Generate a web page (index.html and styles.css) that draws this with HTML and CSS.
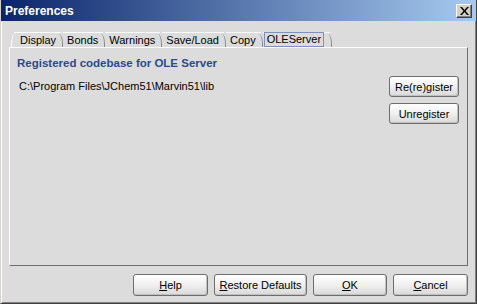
FILE: index.html
```html
<!DOCTYPE html>
<html lang="en">
<head>
    <meta charset="UTF-8" />
    <title>Preferences</title>
    <link rel="stylesheet" href="styles.css">
</head>
<body>

<div class="window">
    <div class="titlebar">
        <span class="title">Preferences</span>
        <button class="close-btn" title="Close">
            <svg width="9" height="8" viewBox="0 0 9 8">
                <path d="M0 0h2l2.5 3 2.5-3h2L5.5 4 9 8H7L4.5 5 2 8H0l3.5-4z" fill="#000"/>
            </svg>
        </button>
    </div>

    <div class="client">
        <div class="tabs">
            <div class="tab first">Display</div>
            <div class="tab">Bonds</div>
            <div class="tab">Warnings</div>
            <div class="tab">Save/Load</div>
            <div class="tab">Copy</div>
            <div class="tab active"><span class="focus">OLEServer</span></div>
        </div>

        <div class="panel">
            <div class="panel-main">
                <h2 class="heading">Registered codebase for OLE Server</h2>
                <p class="path">C:\Program Files\JChem51\Marvin51\lib</p>
            </div>
            <div class="panel-side">
                <button class="btn">Re(re)gister</button>
                <button class="btn">Unregister</button>
            </div>
        </div>

        <div class="footer">
            <button class="btn wide"><u>H</u>elp</button>
            <button class="btn restore"><u>R</u>estore Defaults</button>
            <button class="btn ok"><u>O</u>K</button>
            <button class="btn wide"><u>C</u>ancel</button>
        </div>
    </div>
</div>

</body>
</html>
```

FILE: styles.css
```css
/* WINDOW FRAME */
html, body {
    margin: 0;
    padding: 0;
    width: 477px;
    height: 304px;
    overflow: hidden;
    font-family: 'Liberation Sans', Arial, sans-serif;
    font-size: 11px;
    color: #000;
}

.window {
    box-sizing: border-box;
    width: 477px;
    height: 304px;
    display: flex;
    flex-direction: column;
    background: #dcdcdc;
    border-left: 1px solid #d4d0c8;
    border-right: 1px solid #404040;
    border-bottom: 1px solid #404040;
    box-shadow: inset 1px 0 0 #fff, inset -1px -1px 0 #808080;
}

.titlebar {
    height: 21px;
    flex-shrink: 0;
    display: flex;
    align-items: center;
    justify-content: space-between;
    padding: 0 4px 0 4px;
    background: linear-gradient(to right, #0a246a, #a6caf0);
}

.title {
    color: #fff;
    font-weight: bold;
    font-size: 12px;
    font-family: 'Liberation Sans', Arial, sans-serif;
}

.close-btn {
    width: 16px;
    height: 14px;
    padding: 0;
    margin-top: 1px;
    display: flex;
    align-items: center;
    justify-content: center;
    background: #d4d0c8;
    border: 1px solid;
    border-color: #fff #404040 #404040 #fff;
    box-shadow: inset -1px -1px 0 #808080;
}

.client {
    flex: 1;
    display: flex;
    flex-direction: column;
    padding: 11px 8px 0 8px;
}

/* TABS */
.tabs {
    display: flex;
    height: 15px;
    padding-left: 5px;
}

.tab {
    position: relative;
    height: 14px;
    line-height: 14px;
    padding: 0 5px 0 4px;
    margin-right: 2px;
    border-top: 1px solid #fff;
}
.tab::after {
    content: '';
    position: absolute;
    right: -2px;
    top: 1px;
    width: 3px;
    height: 13px;
    border-right: 1px solid #8a8a8a;
    border-top-right-radius: 4px 10px;
}
.tab.first {
    padding-left: 6px;
}
.tab.first::before {
    content: '';
    position: absolute;
    left: -3px;
    top: 0;
    width: 4px;
    height: 14px;
    border-left: 1px solid #fff;
    border-top-left-radius: 5px 12px;
}
.tab.active {
    padding: 0 6px 0 1px;
    margin-left: 0;
}
.tab.active .focus {
    display: block;
    height: 13px;
    line-height: 13px;
    padding: 0 2px;
    border: 1px solid #7f8fbf;
    margin-top: -1px;
}

.panel {
    box-sizing: border-box;
    flex: 0 0 auto;
    height: 219px;
    display: flex;
    justify-content: space-between;
    padding: 9px 8px 0 7px;
    border-top: 1px solid #fff;
    border-left: 1px solid #fff;
    border-right: 1px solid #6e6e6e;
    border-bottom: 1px solid #6e6e6e;
}

.heading {
    margin: 0;
    font-family: 'Liberation Sans', Arial, sans-serif;
    font-size: 11.5px;
    font-weight: bold;
    color: #2c4a8a;
}

.path {
    margin: 11px 0 0 2px;
}

.panel-side {
    display: flex;
    flex-direction: column;
    gap: 6px;
    padding-top: 19px;
}

/* BUTTONS */
.btn {
    height: 21px;
    width: 70px;
    padding: 0;
    font-family: 'Liberation Sans', Arial, sans-serif;
    font-size: 11px;
    color: #000;
    border: 1px solid #6e6e6e;
    border-radius: 3px;
    background: linear-gradient(to bottom, #ffffff 0%, #f0f0f0 50%, #d8d8d8 100%);
    box-shadow: inset -1px -1px 0 #c0c0c0;
}

.footer {
    display: flex;
    justify-content: flex-end;
    gap: 6px;
    padding: 8px 0 0 0;
}
.footer .wide {
    width: 75px;
    height: 22px;
}
.footer .ok {
    width: 74px;
    height: 22px;
}
.footer .restore {
    width: 93px;
    height: 22px;
}
```
